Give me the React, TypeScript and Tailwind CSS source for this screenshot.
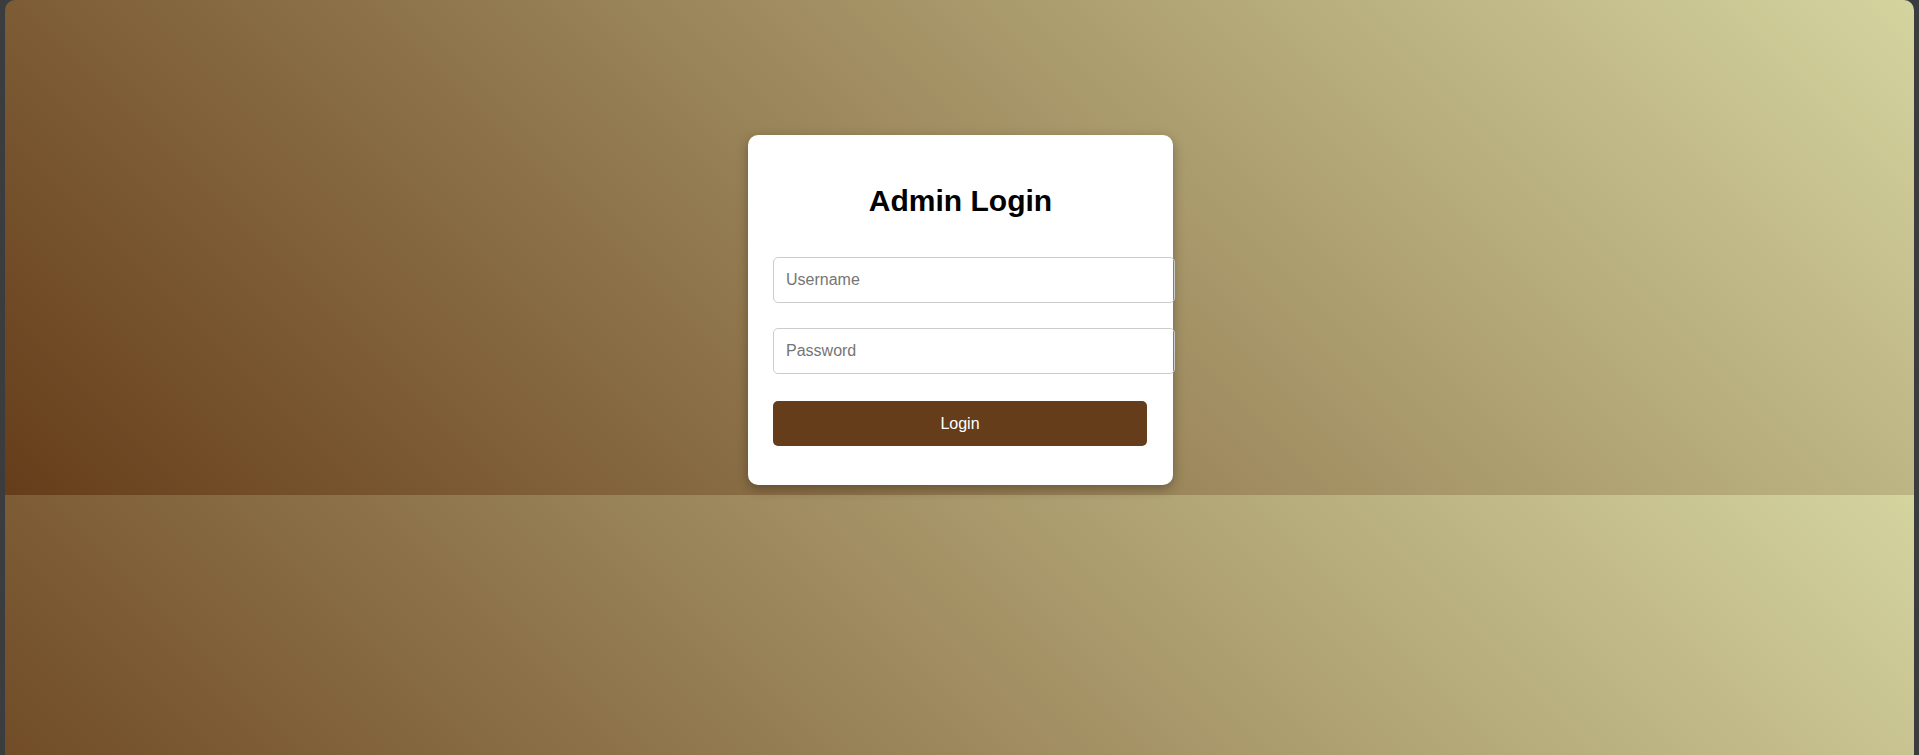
export default function App() {
  return (
    <div className="h-[755px] bg-[#3b3c3e] pl-[5px] pr-[5px] font-['Liberation_Sans',Arial,sans-serif]">
      <div className="h-full rounded-t-[10px] bg-[linear-gradient(45deg,#663d1a,#d4d49f)] bg-[length:100%_495px] bg-repeat">
        <div className="flex h-[495px] justify-center pl-[2px] pt-[135px]">
          {/* login card */}
          <div className="h-[350px] w-[425px] rounded-[10px] bg-white px-[25px] pb-[39px] pt-[49px] shadow-[0_4px_12px_rgba(0,0,0,0.3)]">
            <h2 className="mb-[39px] text-center text-[30px] font-bold leading-[34px] text-black">Admin Login</h2>
            <input
              type="text"
              placeholder="Username"
              className="mb-[25px] block h-[46px] w-[402px] rounded-[5px] border border-[#cccccc] px-[12px] text-[16px] text-black outline-none placeholder:text-[#757575]"
            />
            <input
              type="password"
              placeholder="Password"
              className="mb-[27px] block h-[46px] w-[402px] rounded-[5px] border border-[#cccccc] px-[12px] text-[16px] text-black outline-none placeholder:text-[#757575]"
            />
            <button className="block h-[45px] w-[374px] rounded-[5px] bg-[#663d1a] text-[16px] text-white">
              Login
            </button>
          </div>
        </div>
      </div>
    </div>
  );
}
